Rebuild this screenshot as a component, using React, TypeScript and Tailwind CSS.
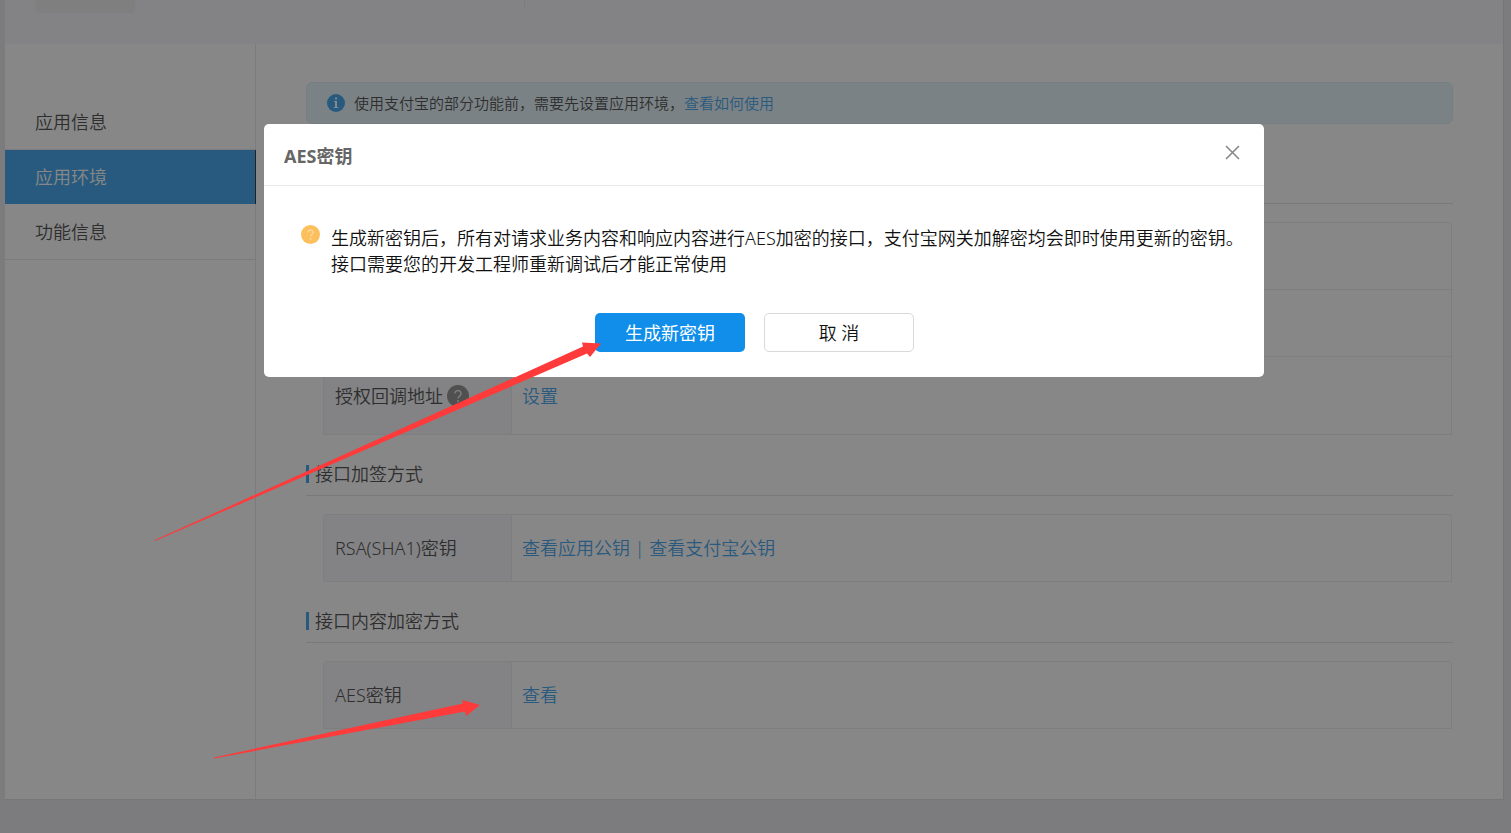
import type { ReactNode } from 'react';

const menuList = ['应用信息', '应用环境', '功能信息'];

function Link({ children }: { children: ReactNode }) {
  return <a href="#" className="text-[#108ee9]">{children}</a>;
}

function SectionTitle({ children }: { children?: ReactNode }) {
  return (
    <h2 className="mt-[17px] flex h-11 items-center border-b border-[#dcdce0] text-lg font-[350]">
      {children && <span className="mr-1.5 h-[18px] w-[3px] bg-[#108ee9]" />}
      {children}
    </h2>
  );
}

function InfoTable({ children }: { children: ReactNode }) {
  return (
    <div className="pt-[18px] pr-px pl-[17px]">
      <table className="w-full table-fixed border-separate border-spacing-0 rounded-t border border-b-0 border-[#e9e9ec] text-lg">
        <tbody>{children}</tbody>
      </table>
    </div>
  );
}

function Row({ label, children, className }: { label?: ReactNode; children?: ReactNode; className: string }) {
  return (
    <tr className={className}>
      <th className="w-[188px] border-r border-b border-[#e9e9ec] bg-[#f4f4f9] pl-[11px] text-left font-[350]">
        {label}
      </th>
      <td className="border-b border-[#e9e9ec] pl-2.5">{children}</td>
    </tr>
  );
}

function Sidebar() {
  return (
    <nav className="w-[251px] shrink-0 border-r border-[#e4e4e8] pt-[51px] text-lg">
      {menuList.map((item) => (
        <a
          key={item}
          href="#"
          className={
            item === '应用环境'
              ? '-mr-px mb-px flex h-[54px] items-center border-r border-black bg-[#108ee9] pl-[30px] text-white'
              : 'flex h-[55px] items-center border-b border-[#e4e4e8] pl-[30px]'
          }
        >
          {item}
        </a>
      ))}
    </nav>
  );
}

function Content() {
  return (
    <main className="min-w-0 grow px-[50px] pt-[38px] pb-[70px]">
      <div className="flex h-[42px] items-center rounded-md border border-[#d2eaf5] bg-[#e0f3f9] pl-5 text-[15px]">
        <svg className="mr-[9px] size-[18px]" viewBox="0 0 18 18">
          <circle cx="9" cy="9" r="9" fill="#108ee9" />
          <path d="M8 3.500h2v2H8zM7 7h3v6h1.200v1H6.800v-1H8V8H7z" fill="#fff" />
        </svg>
        <p>
          使用支付宝的部分功能前，需要先设置应用环境，<Link>查看如何使用</Link>
        </p>
      </div>

      <div className="pt-[19px]">
        <SectionTitle />
        <InfoTable>
          <Row className="h-[67px]" />
          <Row className="h-[67px]" />
          <Row
            className="h-[78px]"
            label={
              <span className="flex items-center">
                授权回调地址
                <svg className="ml-1 size-[22px]" viewBox="0 0 22 22">
                  <circle cx="11" cy="11" r="11" fill="#777" />
                  <path d="M8 8.500a3 3 0 1 1 4.600 2.500c-1 .7-1.600 1.100-1.600 2.400" fill="none" stroke="#e5e5e5" strokeWidth="1.500" />
                  <circle cx="11" cy="16" r="1" fill="#e5e5e5" />
                </svg>
              </span>
            }
          >
            <Link>设置</Link>
          </Row>
        </InfoTable>
      </div>

      <SectionTitle>接口加签方式</SectionTitle>
      <InfoTable>
        <Row className="h-[67px]" label="RSA(SHA1)密钥">
          <Link>查看应用公钥</Link>
          <span className="text-[#108ee9]"> | </span>
          <Link>查看支付宝公钥</Link>
        </Row>
      </InfoTable>

      <SectionTitle>接口内容加密方式</SectionTitle>
      <InfoTable>
        <Row className="h-[67px]" label="AES密钥">
          <Link>查看</Link>
        </Row>
      </InfoTable>
    </main>
  );
}

function KeyDialog() {
  return (
    <div role="dialog" aria-labelledby="dialog-title" className="w-full max-w-[1000px] rounded-[5px] bg-white text-[#111]">
      <header className="flex h-[62px] items-center justify-between border-b border-[#e9e9e9] pr-6 pl-5">
        <h1 id="dialog-title" className="pt-0.5 text-lg font-bold text-[#666]">AES密钥</h1>
        <button type="button" aria-label="关闭" className="pb-1">
          <svg className="size-[15px]" viewBox="0 0 15 15" fill="none" stroke="#888" strokeWidth="1.6">
            <path d="M1 1l13 13M14 1L1 14" />
          </svg>
        </button>
      </header>
      <div className="flex pt-[39px] pl-[37px]">
        <svg className="mr-[11px] size-[19px] shrink-0" viewBox="0 0 19 19">
          <circle cx="9.5" cy="9.5" r="9.5" fill="#fbbf5c" />
          <path d="M7 7.4a2.5 2.5 0 1 1 3.8 2.1c-.9.6-1.3 1-1.3 2" fill="none" stroke="#ffd9a8" strokeWidth="1.3" />
          <circle cx="9.5" cy="13.8" r=".9" fill="#ffd9a8" />
        </svg>
        <p className="text-lg leading-[26px]">
          生成新密钥后，所有对请求业务内容和响应内容进行AES加密的接口，支付宝网关加解密均会即时使用更新的密钥。
          <br />
          接口需要您的开发工程师重新调试后才能正常使用
        </p>
      </div>
      <footer className="flex justify-center pt-9 pb-[25px] text-lg">
        <button type="button" className="mr-[19px] h-[39px] w-[150px] rounded-[5px] bg-[#108ee9] font-normal text-white">
          生成新密钥
        </button>
        <button type="button" className="mr-[19px] h-[39px] w-[150px] rounded-[5px] border border-[#d9d9d9]">
          取 消
        </button>
      </footer>
    </div>
  );
}

export default function App() {
  return (
    <div className="min-h-screen overflow-x-hidden bg-[#e4e4e9] pr-[7px] pl-[5px] font-['Noto_Sans','Noto_Sans_CJK_SC',sans-serif] font-[350] text-[#222]">
      <div className="border-r border-b border-[#d5d5da] bg-white">
        <div className="flex h-11 items-start bg-[#f4f4f9] pl-[30px]">
          <div className="h-[13px] w-[100px] rounded-b bg-[#ebebee]" />
          <div className="ml-[389px] h-2 w-px bg-[#e4e4e9]" />
        </div>
        <div className="flex">
          <Sidebar />
          <Content />
        </div>
      </div>

      <div className="absolute inset-0 flex items-start justify-center bg-[#373737]/60 pt-[124px] pl-[17px]">
        <KeyDialog />
      </div>

      {/* hand drawn arrows */}
      <svg className="pointer-events-none absolute top-0 left-0" width="620" height="780" viewBox="0 0 620 780" fill="#ff3a3a">
        <path d="M155 540L583 346.500L582 342.500L601 343.500L590 357L587 353.500L155 541Z" />
        <path d="M214 757.500L463 703.500L462 700L480 705L466 716L465 711.500L214 758.500Z" />
      </svg>
    </div>
  );
}
